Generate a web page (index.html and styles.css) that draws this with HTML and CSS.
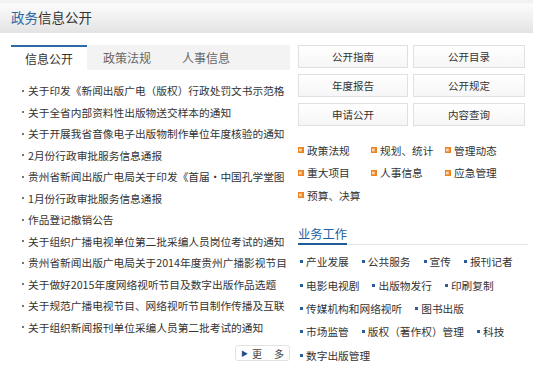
FILE: index.html
```html
<!DOCTYPE html>
<html lang="zh-CN">
<head>
<meta charset="utf-8">
<title>政务信息公开</title>
<link rel="stylesheet" href="styles.css">
</head>
<body>
<div class="page">
  <div class="header"><span class="hl">政务</span>信息公开</div>
  <div class="main">
    <div class="left">
      <div class="tabs">
        <div class="tab active">信息公开</div>
        <div class="tab">政策法规</div>
        <div class="tab">人事信息</div>
      </div>
      <ul class="news">
        <li>关于印发《新闻出版广电（版权）行政处罚文书示范格</li>
        <li>关于全省内部资料性出版物送交样本的通知</li>
        <li>关于开展我省音像电子出版物制作单位年度核验的通知</li>
        <li>2月份行政审批服务信息通报</li>
        <li>贵州省新闻出版广电局关于印发《首届•中国孔学堂图</li>
        <li>1月份行政审批服务信息通报</li>
        <li>作品登记撤销公告</li>
        <li>关于组织广播电视单位第二批采编人员岗位考试的通知</li>
        <li>贵州省新闻出版广电局关于2014年度贵州广播影视节目</li>
        <li>关于做好2015年度网络视听节目及数字出版作品选题</li>
        <li>关于规范广播电视节目、网络视听节目制作传播及互联</li>
        <li>关于组织新闻报刊单位采编人员第二批考试的通知</li>
      </ul>
      <div class="more-row">
        <a class="more" href="#"><span class="tri">▶</span><span>更</span><span>多</span></a>
      </div>
    </div>
    <div class="right">
      <div class="btns">
        <a class="btn" href="#">公开指南</a>
        <a class="btn" href="#">公开目录</a>
        <a class="btn" href="#">年度报告</a>
        <a class="btn" href="#">公开规定</a>
        <a class="btn" href="#">申请公开</a>
        <a class="btn" href="#">内容查询</a>
      </div>
      <div class="cats">
        <a class="cat" href="#"><svg class="ico" width="7" height="7" viewBox="0 0 7 7"><rect width="7" height="7" fill="#ee8420"/><rect x="1.5" y="2" width="3" height="3" fill="#fff"/><rect x="2.5" y="3" width="2.5" height="1" fill="#ee8420"/></svg>政策法规</a>
        <a class="cat" href="#"><svg class="ico" width="7" height="7" viewBox="0 0 7 7"><rect width="7" height="7" fill="#ee8420"/><rect x="1.5" y="2" width="3" height="3" fill="#fff"/><rect x="2.5" y="3" width="2.5" height="1" fill="#ee8420"/></svg>规划、统计</a>
        <a class="cat" href="#"><svg class="ico" width="7" height="7" viewBox="0 0 7 7"><rect width="7" height="7" fill="#ee8420"/><rect x="1.5" y="2" width="3" height="3" fill="#fff"/><rect x="2.5" y="3" width="2.5" height="1" fill="#ee8420"/></svg>管理动态</a>
        <a class="cat" href="#"><svg class="ico" width="7" height="7" viewBox="0 0 7 7"><rect width="7" height="7" fill="#ee8420"/><rect x="1.5" y="2" width="3" height="3" fill="#fff"/><rect x="2.5" y="3" width="2.5" height="1" fill="#ee8420"/></svg>重大项目</a>
        <a class="cat" href="#"><svg class="ico" width="7" height="7" viewBox="0 0 7 7"><rect width="7" height="7" fill="#ee8420"/><rect x="1.5" y="2" width="3" height="3" fill="#fff"/><rect x="2.5" y="3" width="2.5" height="1" fill="#ee8420"/></svg>人事信息</a>
        <a class="cat" href="#"><svg class="ico" width="7" height="7" viewBox="0 0 7 7"><rect width="7" height="7" fill="#ee8420"/><rect x="1.5" y="2" width="3" height="3" fill="#fff"/><rect x="2.5" y="3" width="2.5" height="1" fill="#ee8420"/></svg>应急管理</a>
        <a class="cat" href="#"><svg class="ico" width="7" height="7" viewBox="0 0 7 7"><rect width="7" height="7" fill="#ee8420"/><rect x="1.5" y="2" width="3" height="3" fill="#fff"/><rect x="2.5" y="3" width="2.5" height="1" fill="#ee8420"/></svg>预算、决算</a>
      </div>
      <div class="sec-title"><span>业务工作</span></div>
      <div class="works">
        <a class="work" href="#">产业发展</a>
        <a class="work" href="#">公共服务</a>
        <a class="work" href="#">宣传</a>
        <a class="work" href="#">报刊记者</a>
        <a class="work" href="#">电影电视剧</a>
        <a class="work" href="#">出版物发行</a>
        <a class="work" href="#">印刷复制</a>
        <a class="work" href="#">传媒机构和网络视听</a>
        <a class="work" href="#">图书出版</a>
        <a class="work" href="#">市场监管</a>
        <a class="work" href="#">版权（著作权）管理</a>
        <a class="work" href="#">科技</a>
        <a class="work" href="#">数字出版管理</a>
      </div>
    </div>
  </div>
</div>
</body>
</html>
```

FILE: styles.css
```css
* { box-sizing: border-box; }
html, body { margin: 0; padding: 0; background: #fff; }
body {
  font-family: "Noto Sans CJK SC", "Noto Sans", sans-serif;
  color: #333;
}
a { text-decoration: none; color: inherit; }

.page { width: 533px; }

.header {
  height: 33px;
  padding-left: 11px;
  display: flex;
  align-items: center;
  font-size: 13.5px;
  color: #333;
  background: linear-gradient(#f2f2f2 0, #f2f2f2 3px, #fcfcfc 4px, #e3e3e3 100%);
}
.header .hl { color: #2a68a8; }

.main {
  display: flex;
  padding: 12px 0 0 11px;
}

.left { width: 279px; flex: none; }

.tabs {
  display: flex;
  height: 25px;
  background: #f3f3f3;
}
.tab {
  padding: 0 15px 0 16px;
  font-size: 12px;
  line-height: 25px;
  color: #666;
}
.tab.active {
  width: 76px;
  padding: 0;
  text-align: center;
  background: #fff;
  color: #333;
  border-top: 2px solid #2a6aa6;
  line-height: 23px;
}

.news {
  list-style: none;
  margin: 0;
  padding: 10px 0 0 11px;
}
.news li {
  display: flex;
  align-items: center;
  height: 21.5px;
  font-size: 10.7px;
  color: #333;
  white-space: nowrap;
  overflow: hidden;
}
.news li::before {
  content: "";
  flex: none;
  width: 2px;
  height: 2px;
  margin-right: 4px;
  background: #777;
}

.more-row {
  display: flex;
  justify-content: flex-end;
  padding-top: 7px;
}
.more {
  display: inline-flex;
  align-items: center;
  width: 55px;
  height: 16px;
  padding-left: 5px;
  border: 1px solid #e2e2e2;
  border-radius: 3px;
  font-size: 10px;
  color: #444;
}
.more .tri {
  font-size: 7px;
  color: #1f4f86;
  margin-right: 4px;
}
.more span + span + span { margin-left: 12px; }

.right {
  width: 230px;
  flex: none;
  margin-left: 8px;
}

.btns {
  display: grid;
  grid-template-columns: 110px 112px;
  column-gap: 5px;
  row-gap: 6px;
}
.btn {
  display: flex;
  align-items: center;
  justify-content: center;
  height: 23px;
  border: 1px solid #e0e0e0;
  background: linear-gradient(#ffffff, #f6f6f6);
  font-size: 10.5px;
  color: #333;
}

.cats {
  display: grid;
  grid-template-columns: 73px 74px auto;
  margin-top: 12.75px;
}
.cat {
  display: flex;
  align-items: center;
  height: 22.5px;
  font-size: 10.7px;
  color: #333;
  white-space: nowrap;
}
.cat .ico {
  flex: none;
  width: 6px;
  height: 6px;
  margin-right: 3px;
}

.sec-title {
  margin-top: 14px;
  width: 230px;
  border-bottom: 1px solid #e6e6e6;
}
.sec-title span {
  display: inline-block;
  height: 20px;
  line-height: 18px;
  font-size: 12.25px;
  color: #24609e;
  border-bottom: 2px solid #1d5a96;
  margin-bottom: -1px;
}

.works {
  display: flex;
  flex-wrap: wrap;
  column-gap: 11px;
  width: 223px;
  margin-top: 5px;
}
.work {
  display: flex;
  align-items: center;
  height: 23.3px;
  padding-left: 2px;
  font-size: 10.7px;
  color: #333;
  white-space: nowrap;
}
.work::before {
  content: "";
  width: 3px;
  height: 3px;
  margin-right: 3px;
  background: #2a5d9a;
}
```
